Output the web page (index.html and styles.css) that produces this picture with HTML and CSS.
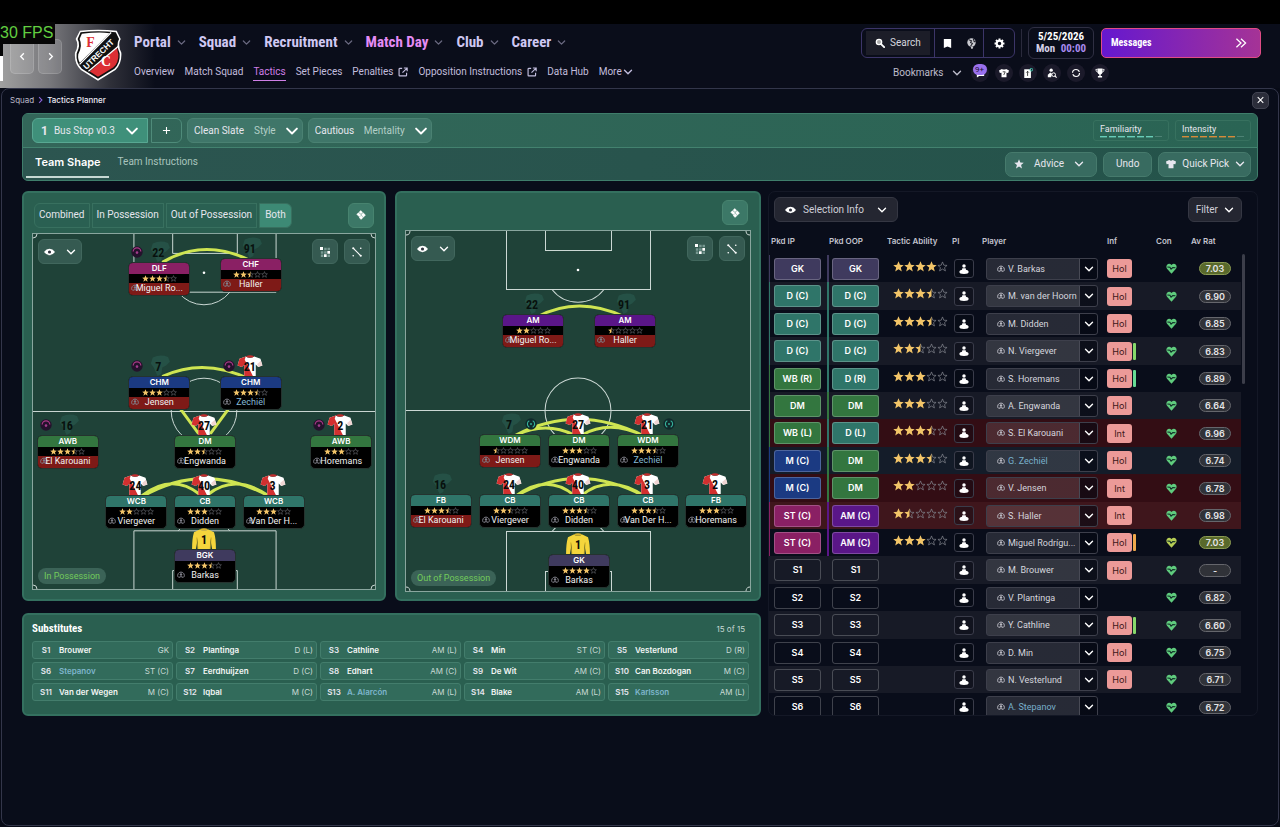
FILE: index.html
```html
<!DOCTYPE html>
<html lang="en">
<head>
<meta charset="utf-8">
<title>Tactics Planner</title>
<link rel="stylesheet" href="styles.css">
</head>
<body>
<svg class="defs" aria-hidden="true">
  <symbol id="chev" viewBox="0 0 10 10"><path d="M1.500 3.300 5 6.800 8.500 3.300" fill="none" stroke="currentColor" stroke-width="1.400" stroke-linecap="round" stroke-linejoin="round"/></symbol>
  <symbol id="star" viewBox="0 0 12 12"><path d="M6 .3 7.600 4.200 11.700 4.500 8.500 7.200 9.600 11.400 6 9 2.400 11.400 3.500 7.200.3 4.500 4.400 4.200Z" fill="currentColor"/></symbol>
  <symbol id="star-off" viewBox="0 0 12 12"><path d="M6 1 7.400 4.600 11 4.800 8.200 7.200 9.200 10.800 6 8.800 2.800 10.800 3.800 7.200 1 4.800 4.600 4.600Z" fill="none" stroke="#81838c" stroke-width=".8"/></symbol>
  <symbol id="star-half" viewBox="0 0 12 12"><path d="M6 1 7.400 4.600 11 4.800 8.200 7.200 9.200 10.800 6 8.800" fill="none" stroke="#81838c" stroke-width=".8"/><path d="M6 .3V9L2.400 11.400 3.500 7.200.3 4.500 4.400 4.200Z" fill="currentColor"/></symbol>
  <symbol id="ext" viewBox="0 0 12 12"><path d="M5 1.700H2Q1.300 1.700 1.300 2.400V10Q1.300 10.700 2 10.700H9.600Q10.300 10.700 10.300 10V7M7 1.200H11V5M10.600 1.600 5.400 6.800" fill="none" stroke="currentColor" stroke-width="1.400"/></symbol>
  <symbol id="eye" viewBox="0 0 14 10"><path d="M0 5Q3 .8 7 .8T14 5Q11 9.200 7 9.200T0 5Z" fill="currentColor"/><circle cx="7" cy="5" r="2" fill="#30333f"/></symbol>
  <symbol id="face" viewBox="0 0 12 12"><path d="M1.600 9A5 5 0 1 1 10.400 9" fill="none" stroke="currentColor" stroke-width="1.500"/><circle cx="6" cy="5.300" r="1.800" fill="currentColor"/><path d="M1.400 10.200 4.500 8H7.500L10.600 10.200H8L6 9 4 10.200Z" fill="currentColor"/></symbol>
  <symbol id="pawn" viewBox="0 0 12 12"><circle cx="6" cy="2.300" r="2.100" fill="currentColor"/><path d="M4 5H8L8.400 6.800Q11.600 7.400 11.600 9.400Q11.600 12 6 12T.4 9.400Q.4 7.400 3.600 6.800Z" fill="currentColor"/></symbol>
  <symbol id="heart" viewBox="0 0 12 12"><path d="M6 11.600 1.100 6.400Q-.3 3.700 1.200 1.800Q3.700-.4 6 2.300Q8.300-.4 10.800 1.800Q12.300 3.700 10.900 6.400Z" fill="currentColor"/><path d="M1.500 4.300 4.300 4.700 5.500 6.800 7.400 5 10.300 5.200" fill="none" stroke="#102c27" stroke-width="1.200"/></symbol>
  <symbol id="kit" viewBox="0 0 27 22"><path d="M9 1.500 2.500 4 .5 11 5 12.500 7.500 10V22H19.500V10L22 12.500 26.500 11 24.500 4 18 1.500Q13.500 4 9 1.500Z" fill="#fff"/><path d="M9 1.500 2.500 4 .5 11 5 12.500 7.500 10V22H16.500L8 5Z" fill="#d2302f"/><path d="M24.900 6 26.500 11 22 12.500 21 9.500Z" fill="#f0d5d3"/><path d="M9 1.500Q13.500-1 18 1.500Q13.500 4 9 1.500Z" fill="#c42c2c"/></symbol>
  <symbol id="keeper" viewBox="0 0 27 22"><path d="M9 1.500 3 4.500Q1 11 1 22H5L7 11V22H20V11L22 22H26Q26 11 24 4.500L18 1.500Q13.500 4 9 1.500Z" fill="#f4d53c"/><path d="M9 1.500Q13.500-1 18 1.500Q13.500 4 9 1.500Z" fill="#d8b42c"/><path d="M6 10 7 22M21 10 20 22" stroke="#b99a20" stroke-width=".8"/></symbol>
  <symbol id="ghost" viewBox="0 0 27 22"><path d="M8 2.500Q16-1 24 2L26 7 22 11 18 13 17 20 13 22 9 13 6 9Z" fill="#255146"/></symbol>
  <symbol id="attack" viewBox="0 0 12 12"><circle cx="6" cy="6" r="5.700" fill="#24122c"/><path d="M2.200 5.600A3.800 3.800 0 0 1 9.800 5.600" fill="none" stroke="#a83a86" stroke-width="1.200"/><circle cx="6" cy="6.600" r="1.300" fill="#a33d8d"/></symbol>
  <symbol id="defend" viewBox="0 0 12 12"><circle cx="6" cy="6" r="5.700" fill="#10292b"/><path d="M4.300 2.800A3.600 3.600 0 0 0 4.300 9.200M7.700 2.800A3.600 3.600 0 0 1 7.700 9.200" fill="none" stroke="#35b39b" stroke-width="1.100"/><circle cx="6" cy="6" r=".9" fill="#35b39b"/></symbol>
  <symbol id="tiles" viewBox="0 0 12 12"><path d="M5.600.6 8 2.800 6 4.800 3.600 2.600ZM3 3.200 6.200 6 4 8.200.8 5.200ZM8.600 3.400 11.400 6 9 8.600 6.400 5.600ZM6.200 6.600 8.500 9 6.200 11.400 3.700 9Z" fill="currentColor" stroke="currentColor" stroke-width=".5"/></symbol>
  <symbol id="dots" viewBox="0 0 12 12"><g fill="#779891"><path d="M5 1H8V4H5ZM9 1H12V4H9ZM1 5H4V8H1ZM5 5H8V8H5ZM1 9H4V12H1ZM9 9H12V12H9Z"/></g><path d="M0 0H3.600V3.600H0ZM8.800 4.800H12V8H8.800ZM4.800 8.800H8V12H4.800Z" fill="#fff"/></symbol>
  <symbol id="link" viewBox="0 0 12 12"><path d="M2 2 10 10" stroke="#fff" stroke-width="1.300"/><g fill="#fff"><circle cx="1.500" cy="1.500" r="1.300"/><circle cx="10.500" cy="10.500" r="1.300"/><circle cx="10.500" cy="1.500" r="1"/><circle cx="1.500" cy="10.500" r="1"/></g></symbol>
  <symbol id="tee" viewBox="0 0 14 12"><path d="M4.500.5 0 2.500.8 6.300 3.500 6V12H10.500V6L13.200 6.300 14 2.500 9.500.5Q7 2.500 4.500.5Z" fill="currentColor"/></symbol>
</svg>

<div class="letterbox"></div>
<div class="fps">30 FPS</div>

<header class="top">
  <div class="club">
    <button class="step" aria-label="Back"><svg viewBox="0 0 10 10"><path d="M6.500 1.500 3 5 6.500 8.500"/></svg></button>
    <button class="step" aria-label="Forward"><svg viewBox="0 0 10 10"><path d="M3.500 1.500 7 5 3.500 8.500"/></svg></button>
    <svg class="crest" viewBox="222 26 146 160" role="img" aria-label="FC Utrecht">
      <path d="M240 31Q295 25 352 31L364 56Q354 74 366 98Q368 132 348 150L295 183 243 150Q222 130 225 98Q238 74 227 56Z" fill="#fff"/>
      <path d="M242 35Q295 29 349 35L359 56Q349 74 361 100Q363 130 345 146L295 177 246 146Q227 128 230 100Q243 74 233 56Z" fill="#111"/>
      <path d="M246 40Q295 34 330 38L240 128Q233 118 235 102Q249 76 239 56Z" fill="#fff"/>
      <path d="M353 82Q354 92 357 102Q358 127 342 142L295 171 270 155Z" fill="#dc2f34"/>
      <path d="M335 36 239 133M357 78 266 154" stroke="#fff" stroke-width="4" fill="none"/>
      <text x="259" y="80" class="crest-f">F</text>
      <text x="304" y="139" class="crest-c">C</text>
      <text transform="translate(260 150) rotate(-44)" class="crest-band">UTRECHT</text>
    </svg>
  </div>
  <div class="navs">
    <nav class="primary" aria-label="Main">
      <a href="#">Portal <svg><use href="#chev"/></svg></a>
      <a href="#">Squad <svg><use href="#chev"/></svg></a>
      <a href="#">Recruitment <svg><use href="#chev"/></svg></a>
      <a href="#" class="on">Match Day <svg><use href="#chev"/></svg></a>
      <a href="#">Club <svg><use href="#chev"/></svg></a>
      <a href="#">Career <svg><use href="#chev"/></svg></a>
    </nav>
    <nav class="secondary" aria-label="Match Day">
      <a href="#">Overview</a>
      <a href="#">Match Squad</a>
      <a href="#" class="on">Tactics</a>
      <a href="#">Set Pieces</a>
      <a href="#">Penalties <svg><use href="#ext"/></svg></a>
      <a href="#">Opposition Instructions <svg><use href="#ext"/></svg></a>
      <a href="#">Data Hub</a>
      <a href="#" class="more">More <svg><use href="#chev"/></svg></a>
    </nav>
  </div>
  <div class="tools">
    <div class="tools-row">
      <div class="toolgroup">
        <button class="search"><svg viewBox="0 0 12 12"><circle cx="4.800" cy="4.800" r="3.200" fill="#aaa" stroke="#fff" stroke-width="1.600"/><path d="M7.300 7.300 11 11" stroke="#fff" stroke-width="2.200" stroke-linecap="round"/></svg>Search</button>
        <div class="tool-pair">
          <button class="tool" aria-label="Bookmark"><svg viewBox="0 0 12 12"><path d="M2 1H10V11L6 9.400 2 11Z" fill="#fff"/></svg></button>
          <button class="tool" aria-label="World"><svg viewBox="0 0 12 12"><circle cx="6" cy="5" r="4.600" fill="#c9cad0"/><path d="M3 2 6 3 5 5 7 6 5 9M8 1 9 4 10.500 4" stroke="#24252f" stroke-width="1.200" fill="none"/><path d="M5 9.500H8L7 12H6Z" fill="#c9cad0"/></svg></button>
        </div>
        <button class="tool gear" aria-label="Settings"><svg viewBox="0 0 12 12"><circle cx="6" cy="6" r="3" fill="none" stroke="#fff" stroke-width="2.200"/><g stroke="#fff" stroke-width="2.200"><path d="M6 .6V2.600M6 9.400V11.400M.6 6H2.600M9.400 6H11.400M2.200 2.200 3.600 3.600M8.400 8.400 9.800 9.800M9.800 2.200 8.400 3.600M3.600 8.400 2.200 9.800"/></g></svg></button>
      </div>
      <span class="rule"></span>
      <div class="date"><b>5/25/2026</b><b>Mon <i>00:00</i></b></div>
      <button class="messages">Messages <svg viewBox="0 0 14 12"><path d="M1.500 1 7 6 1.500 11M7 1 12.500 6 7 11" fill="none" stroke="#fff" stroke-width="1.500"/></svg></button>
    </div>
    <div class="bookmarks">
      <button class="bm-label">Bookmarks <svg><use href="#chev"/></svg></button>
      <button class="disc" aria-label="Inbox"><svg viewBox="0 0 12 12"><path d="M2 5H11V9.500H5L2.300 11.500Z" fill="#fff"/></svg><span class="badge">9+</span></button>
      <button class="disc" aria-label="Squad"><svg viewBox="0 0 14 12"><path d="M4 .5 0 2.600 1.200 6 3.500 5.600V12H10.500V5.600L12.800 6 14 2.600 10 .5Q7 2 4 .5Z" fill="#fff"/><path d="M5.200 4.300H8.700L6.700 8.800" stroke="#222" stroke-width="1.100" fill="none"/></svg></button>
      <button class="disc" aria-label="Tactics"><svg viewBox="0 0 12 12"><path d="M1.500 1.500H9.500V12H1.500Z" fill="#fff"/><path d="M5.500 4V9.500M4 5.500 5.500 4 7 5.500" stroke="#222" stroke-width="1" fill="none"/><circle cx="10" cy="2" r="1.600" fill="none" stroke="#3fc4ad" stroke-width="1.200"/></svg></button>
      <button class="disc" aria-label="Scouting"><svg viewBox="0 0 12 12"><circle cx="5" cy="2.600" r="2" fill="#fff"/><path d="M4 5.500 1 8V11H5L6 7" fill="#fff"/><circle cx="8" cy="8" r="2.200" fill="none" stroke="#fff" stroke-width="1.200"/><path d="M9.500 9.500 11.500 11.500" stroke="#fff" stroke-width="1.400"/></svg></button>
      <button class="disc" aria-label="Refresh"><svg viewBox="0 0 12 12"><circle cx="6" cy="6" r="4.200" fill="none" stroke="#fff" stroke-width="1.400" stroke-dasharray="11.200 2"/></svg></button>
      <button class="disc" aria-label="Competitions"><svg viewBox="0 0 12 12"><path d="M3 .5H9V5Q8.500 7.300 6.800 7.700V9.500H8.500V11.500H3.500V9.500H5.200V7.700Q3.500 7.300 3 5Z" fill="#fff"/><path d="M3 1.700H1Q1 4.600 3.400 5M9 1.700H11Q11 4.600 8.600 5" fill="none" stroke="#fff"/></svg></button>
    </div>
  </div>
</header>

<main class="frame">
  <div class="crumbs">
    <a href="#">Squad</a>
    <svg viewBox="0 0 10 10"><path d="M3 1 7 5 3 9"/></svg>
    <span>Tactics Planner</span>
    <button class="close" aria-label="Close"><svg viewBox="0 0 10 10"><path d="M1 1 9 9M9 1 1 9"/></svg></button>
  </div>

  <section class="toolbar">
    <div class="bar">
      <label class="drop tactic"><b>1</b><select aria-label="Tactic"><option>Bus Stop v0.3</option></select><svg><use href="#chev"/></svg></label>
      <button class="plus" aria-label="Add tactic"><svg viewBox="0 0 10 10"><path d="M5 1V9M1 5H9"/></svg></button>
      <label class="drop"><select><option>Clean Slate</option></select><span>Style</span><svg><use href="#chev"/></svg></label>
      <label class="drop"><select><option>Cautious</option></select><span>Mentality</span><svg><use href="#chev"/></svg></label>
      <div class="meters">
        <div class="meter teal">Familiarity<div class="dashes"><i></i><i></i><i></i><i></i><i></i><i></i><i></i></div></div>
        <div class="meter amber">Intensity<div class="dashes"><i></i><i></i><i></i><i></i><i></i><i></i><i></i></div></div>
      </div>
    </div>
    <div class="bar lower">
      <a href="#" class="tab on">Team Shape</a>
      <a href="#" class="tab">Team Instructions</a>
      <div class="actions">
        <button class="act"><svg><use href="#star"/></svg>Advice<svg><use href="#chev"/></svg></button>
        <button class="act">Undo</button>
        <button class="act tight"><svg><use href="#tee"/></svg>Quick Pick<svg><use href="#chev"/></svg></button>
      </div>
    </div>
  </section>

  <div class="columns">
    <div class="left">
      <div class="pitches">
        <section class="board">
          <div class="board-head">
            <button class="seg">Combined</button>
            <button class="seg">In Possession</button>
            <button class="seg">Out of Possession</button>
            <button class="seg on" aria-pressed="true">Both</button>
            <button class="square" aria-label="Layout"><svg><use href="#tiles"/></svg></button>
          </div>
          <div class="pitch in" id="pitch-in">
            <svg class="lines" viewBox="0 0 344 357" preserveAspectRatio="none">
              <g class="chalk">
                <path d="M101.500 0V58.500H244.500V0M140.500 0V19.500H205.500V0M146 58.500A33 33 0 0 0 198 58.500M0 178.500H344M101.500 357V298.500H244.500V357M140.500 357V338.500H205.500V357M146 298.500A33 33 0 0 1 198 298.500M0 4A4 4 0 0 0 4 0M340 0A4 4 0 0 0 344 4M0 353A4 4 0 0 1 4 357M340 357A4 4 0 0 1 344 353"/>
                <circle cx="172" cy="178" r="33"/>
              </g>
              <circle cx="172" cy="39" r="1.300" fill="#fff"/>
              <path class="chem" d="M131 28Q172 4 217 26M131 143Q172 124 218 146M147 174 166 200M198 174 179 200M110 263Q140 240 168 262M110 264Q172 228 238 264M176 262Q204 240 238 264"/>
            </svg>
            <button class="glass eye" aria-label="View"><svg class="eye-i"><use href="#eye"/></svg><svg><use href="#chev"/></svg></button>
            <div class="glasses"><button class="glass" aria-label="Zones"><svg><use href="#dots"/></svg></button><button class="glass" aria-label="Partnerships"><svg><use href="#link"/></svg></button></div>
            <span class="phase">In Possession</span>
          </div>
        </section>
        <section class="board">
          <div class="board-head short">
            <button class="square" aria-label="Layout"><svg><use href="#tiles"/></svg></button>
          </div>
          <div class="pitch out" id="pitch-out">
            <svg class="lines" viewBox="0 0 344 360" preserveAspectRatio="none">
              <g class="chalk">
                <path d="M100.500 0V58.500H244.500V0M139.500 0V19.500H205.500V0M146 58.500A33 33 0 0 0 198 58.500M0 179.500H344M100.500 360V300.500H244.500V360M139.500 360V340.500H205.500V360M146 300.500A33 33 0 0 1 198 300.500M0 4A4 4 0 0 0 4 0M340 0A4 4 0 0 0 344 4M0 356A4 4 0 0 1 4 360M340 360A4 4 0 0 1 344 356"/>
                <circle cx="172" cy="180" r="33"/>
              </g>
              <circle cx="172" cy="39" r="1.300" fill="#fff"/>
              <path class="chem" d="M131 86Q172 64 219 86M110 204Q140 190 168 204M110 204Q172 172 238 205M176 204Q204 188 238 205M110 265Q140 242 168 264M110 265Q172 230 238 265M176 264Q204 242 238 265"/>
            </svg>
            <button class="glass eye" aria-label="View"><svg class="eye-i"><use href="#eye"/></svg><svg><use href="#chev"/></svg></button>
            <div class="glasses"><button class="glass" aria-label="Zones"><svg><use href="#dots"/></svg></button><button class="glass" aria-label="Partnerships"><svg><use href="#link"/></svg></button></div>
            <span class="phase">Out of Possession</span>
          </div>
        </section>
      </div>
      <section class="subs">
        <div class="subs-head"><h2>Substitutes</h2><span>15 of 15</span></div>
        <div class="subs-grid" id="subs"></div>
      </section>
    </div>

    <section class="selection">
      <div class="sel-head">
        <button class="dark"><svg class="eye-i"><use href="#eye"/></svg>Selection Info<svg><use href="#chev"/></svg></button>
        <button class="dark filter">Filter<svg><use href="#chev"/></svg></button>
      </div>
      <div class="scroller">
        <table>
          <colgroup><col class="c58"><col class="c58"><col class="c64"><col class="c31"><col class="c121"><col class="c45"><col class="c43"><col class="c52"></colgroup>
          <thead><tr><th>Pkd IP</th><th>Pkd OOP</th><th>Tactic Ability</th><th class="wide">PI</th><th>Player</th><th class="inf">Inf</th><th class="con">Con</th><th>Av Rat</th></tr></thead>
          <tbody id="rows"></tbody>
        </table>
        <span class="thumb"></span>
      </div>
    </section>
  </div>
</main>
<script src="app.js"></script>
</body>
</html>
```
FILE: app.js
```js
const icon = (id, cls = '') => `<svg class="${cls}"><use href="#${id}"/></svg>`;

function stars(value) {
  let out = '';
  for (let i = 1; i <= 5; i++) {
    out += icon(value >= i ? 'star' : value >= i - 0.5 ? 'star-half' : 'star-off');
  }
  return `<span class="stars" role="img" aria-label="${value} of 5">${out}</span>`;
}

/* x, y: top centre of the card, in pitch units */
const inPossession = [
  { x: 127, y: 28, role: 'DLF', tone: 'st', rate: 3.5, name: 'Miguel Ro...', no: 22, kit: 'ghost', out: 1, duty: 'attack' },
  { x: 219, y: 24, role: 'CHF', tone: 'st', rate: 2.5, name: 'Haller', no: 91, kit: 'ghost', out: 1 },
  { x: 127, y: 143, role: 'CHM', tone: 'm', rate: 3, name: 'Jensen', no: 7, kit: 'ghost', out: 1, duty: 'attack' },
  { x: 219, y: 143, role: 'CHM', tone: 'm', rate: 3.5, name: 'Zechiël', no: 21, kit: 'kit', young: 1, duty: 'attack' },
  { x: 35, y: 202, role: 'AWB', tone: 'dm', rate: 3.5, name: 'El Karouani', no: 16, kit: 'ghost', out: 1, duty: 'attack' },
  { x: 173, y: 202, role: 'DM', tone: 'dm', rate: 2.5, name: 'Engwanda', no: 27, kit: 'kit' },
  { x: 310, y: 202, role: 'AWB', tone: 'dm', rate: 3, name: 'Horemans', no: 2, kit: 'kit', duty: 'attack' },
  { x: 104, y: 262, role: 'WCB', tone: 'd', rate: 2, name: 'Viergever', no: 24, kit: 'kit' },
  { x: 173, y: 262, role: 'CB', tone: 'd', rate: 3, name: 'Didden', no: 40, kit: 'kit' },
  { x: 242, y: 262, role: 'WCB', tone: 'd', rate: 3, name: 'Van Der H...', no: 3, kit: 'kit' },
  { x: 173, y: 317, role: 'BGK', tone: 'gk', rate: 3.5, name: 'Barkas', no: 1, kit: 'keeper' }
];
const outOfPossession = [
  { x: 127, y: 83, role: 'AM', tone: 'am', rate: 2, name: 'Miguel Ro...', no: 22, kit: 'ghost', out: 1 },
  { x: 219, y: 83, role: 'AM', tone: 'am', rate: 0.5, name: 'Haller', no: 91, kit: 'ghost', out: 1 },
  { x: 104, y: 203, role: 'WDM', tone: 'dm', rate: 0.5, name: 'Jensen', no: 7, kit: 'ghost', out: 1, duty: 'defend' },
  { x: 173, y: 203, role: 'DM', tone: 'dm', rate: 3, name: 'Engwanda', no: 27, kit: 'kit' },
  { x: 242, y: 203, role: 'WDM', tone: 'dm', rate: 3.5, name: 'Zechiël', no: 21, kit: 'kit', young: 1, duty: 'defend' },
  { x: 35, y: 263, role: 'FB', tone: 'd', rate: 3.5, name: 'El Karouani', no: 16, kit: 'ghost', out: 1 },
  { x: 104, y: 263, role: 'CB', tone: 'd', rate: 2.5, name: 'Viergever', no: 24, kit: 'kit' },
  { x: 173, y: 263, role: 'CB', tone: 'd', rate: 3.5, name: 'Didden', no: 40, kit: 'kit' },
  { x: 242, y: 263, role: 'CB', tone: 'd', rate: 3.5, name: 'Van Der H...', no: 3, kit: 'kit' },
  { x: 310, y: 263, role: 'FB', tone: 'd', rate: 3, name: 'Horemans', no: 2, kit: 'kit' },
  { x: 173, y: 323, role: 'GK', tone: 'gk', rate: 4, name: 'Barkas', no: 1, kit: 'keeper' }
];

function drawPitch(id, players, height) {
  document.getElementById(id).insertAdjacentHTML('beforeend', players.map(p => `
    <div class="node" style="left:${p.x / 344 * 100}%;top:${p.y / height * 100}%">
      <div class="shirt ${p.kit}">${icon(p.kit)}<b>${p.no}</b></div>
      ${p.duty ? icon(p.duty, 'duty ' + p.duty) : ''}
      <div class="card">
        <div class="role ${p.tone}">${p.role}</div>
        ${stars(p.rate)}
        <div class="who ${p.out ? 'absent' : ''} ${p.young ? 'young' : ''}">${icon('face')}<span>${p.name}</span></div>
      </div>
    </div>`).join(''));
}
drawPitch('pitch-in', inPossession, 357);
drawPitch('pitch-out', outOfPossession, 360);

const subs = [
  ['Brouwer', 'GK'], ['Plantinga', 'D (L)'], ['Cathline', 'AM (L)'], ['Min', 'ST (C)'], ['Vesterlund', 'D (R)'],
  ['Stepanov', 'ST (C)', 1], ['Eerdhuijzen', 'D (C)'], ['Edhart', 'AM (C)'], ['De Wit', 'AM (C)'], ['Can Bozdogan', 'M (C)'],
  ['Van der Wegen', 'M (C)'], ['Iqbal', 'M (C)'], ['A. Alarcón', 'AM (L)', 1], ['Blake', 'AM (L)'], ['Karlsson', 'AM (L)', 1]
];
document.getElementById('subs').innerHTML = subs.map(([name, pos, young], i) =>
  `<div class="sub"><b>S${i + 1}</b><strong class="${young ? 'young' : ''}">${name}</strong><span>${pos}</span></div>`).join('');

/* in possession, out of possession, stars, name, info, info bar, rating, flags */
const rows = [
  ['GK', 'GK', 4, 'V. Barkas', 'Hol', '', '7.03'],
  ['D (C)', 'D (C)', 3.5, 'M. van der Hoorn', 'Hol', '', '6.90'],
  ['D (C)', 'D (C)', 3.5, 'M. Didden', 'Hol', '', '6.85'],
  ['D (C)', 'D (C)', 2.5, 'N. Viergever', 'Hol', 'lime', '6.83'],
  ['WB (R)', 'D (R)', 3, 'S. Horemans', 'Hol', 'mint', '6.89'],
  ['DM', 'DM', 3, 'A. Engwanda', 'Hol', '', '6.64'],
  ['WB (L)', 'D (L)', 3.5, 'S. El Karouani', 'Int', '', '6.96', 'red'],
  ['M (C)', 'DM', 3.5, 'G. Zechiël', 'Hol', '', '6.74', 'young'],
  ['M (C)', 'DM', 2, 'V. Jensen', 'Int', '', '6.78', 'red'],
  ['ST (C)', 'AM (C)', 1.5, 'S. Haller', 'Int', '', '6.98', 'red lit'],
  ['ST (C)', 'AM (C)', 3, 'Miguel Rodrígu...', 'Hol', 'orange', '7.03', 'tired'],
  ['S1', 'S1', 0, 'M. Brouwer', 'Hol', '', '-'],
  ['S2', 'S2', 0, 'V. Plantinga', '', '', '6.82'],
  ['S3', 'S3', 0, 'Y. Cathline', 'Hol', 'lime', '6.60'],
  ['S4', 'S4', 0, 'D. Min', 'Hol', '', '6.75'],
  ['S5', 'S5', 0, 'N. Vesterlund', 'Hol', '', '6.71'],
  ['S6', 'S6', 0, 'A. Stepanov', '', '', '6.72', 'young']
];
const tones = { GK: 'gk', D: 'd', WB: 'dm', DM: 'dm', M: 'm', ST: 'st', AM: 'am' };
const tone = pos => tones[pos.split(' ')[0]] || 'none';

document.getElementById('rows').innerHTML = rows.map(([ip, oop, rate, name, info, bar, avg, flags = '']) => `
  <tr class="${flags}">
    <td class="edge edge-${tone(ip)}"><button class="pos ${tone(ip)}">${ip}</button></td>
    <td class="edge edge-${tone(oop)}"><button class="pos ${tone(oop)}">${oop}</button></td>
    <td class="ability">${rate ? stars(rate) : ''}</td>
    <td><button class="pi" aria-label="Player instructions">${icon('pawn')}</button></td>
    <td><div class="pick">${icon('face', 'pick-face')}<select aria-label="Player"><option>${name}</option></select>${icon('chev', 'pick-chev')}</div></td>
    <td class="inf">${info ? `<span class="tag">${info}</span>` : ''}${bar ? `<span class="tagbar ${bar}"></span>` : ''}</td>
    <td class="heart">${icon('heart')}</td>
    <td class="rate"><span class="${avg === '7.03' ? 'good' : ''}">${avg}</span></td>
  </tr>`).join('');
```
FILE: styles.css
```css
* { box-sizing: border-box; }
html, body { height: 100%; }
body {
  margin: 0;
  display: flex;
  flex-direction: column;
  background: #080b17;
  color: #e6e6ee;
  font: 10px/12px Roboto, "Liberation Sans", sans-serif;
}
button, select { font: inherit; color: inherit; margin: 0; padding: 0; border: 0; background: none; white-space: nowrap; }
select { appearance: none; outline: 0; }
select option { color: #111; }
a { color: inherit; text-decoration: none; }
svg { display: block; flex: none; }
.defs { position: absolute; width: 0; height: 0; }
.young { color: #84b9d4; }

/* ---------- header ---------- */
.letterbox { height: 24px; background: #000; flex: none; }
.fps {
  position: absolute; left: 0; top: 22px; width: 55px; height: 22px;
  background: #060606; color: #62cf41; white-space: nowrap;
  font: 16px/21px "Liberation Sans", sans-serif;
}
.fps::after { content: ""; position: absolute; left: 0; top: 22px; width: 3px; height: 37px; background: linear-gradient(#060606 12px, #fff 12px); }
.top {
  display: flex; flex: none; height: 64px; padding-right: 19px;
  background: linear-gradient(90deg, #a0a0a0 0, #77777b 50px, #2f3039 110px, #0a0d1a 155px);
}
.club { display: flex; width: 134px; padding: 5px 0 0 10px; }
.step {
  width: 24px; height: 35px; margin: 10px 4px 0 0; border-radius: 5px;
  background: rgba(255, 255, 255, .13); border: 1px solid rgba(255, 255, 255, .14);
}
.step svg { width: 9px; height: 9px; margin: auto; fill: none; stroke: #fff; stroke-width: 1.5; }
.crest { width: 48px; height: 53px; margin-left: 8px; }
.crest-f, .crest-c { font: bold 42px "Liberation Serif", serif; }
.crest-f { fill: #dc2f34; }
.crest-c { fill: #fff; }
.crest-band { font: bold 25px "Liberation Sans", sans-serif; fill: #fff; }

.navs { flex: 1; }
.primary, .secondary, .tools-row, .bookmarks { display: flex; align-items: center; }
.primary { height: 36px; gap: 13px; }
.primary a {
  display: flex; align-items: center; gap: 6px; color: #cfc8f2; white-space: nowrap;
  font: bold 15px/20px "Liberation Sans Narrow", "Roboto Condensed", "Liberation Sans", sans-serif;
}
.primary svg { width: 9px; height: 9px; color: #6a6980; }
.primary .on { color: #e58bf5; }
.secondary { height: 24px; gap: 10px; color: #c2bddd; white-space: nowrap; }
.secondary a { display: flex; gap: 5px; align-items: center; height: 17px; border-bottom: 1px solid transparent; }
.secondary svg { width: 10px; height: 10px; }
.secondary .more { gap: 1px; }
.secondary .on { color: #cf7fe6; border-color: #cf7fe6; }

.tools-row { height: 37px; padding-top: 1px; }
.toolgroup { display: flex; height: 30px; border: 1px solid #3c3568; border-radius: 6px; overflow: hidden; }
.search { display: flex; align-items: center; gap: 5px; width: 64px; margin: 2px 4px; padding-left: 9px; background: #1c1d28; color: #d5d5de; }
.search svg { width: 10px; height: 10px; }
.tool-pair { display: flex; width: 50px; border: solid #3c3568; border-width: 0 1px; }
.tool { flex: 1; }
.tool svg { width: 11px; height: 11px; margin: auto; }
.gear { flex: none; width: 30px; }
.rule { width: 1px; height: 28px; background: #2a2a3c; margin: 0 6px; }
.date {
  display: flex; flex-direction: column; align-items: center; justify-content: center;
  width: 66px; height: 32px; border: 1px solid #2f2f42; border-radius: 6px;
}
.date b { font: bold 11px/12px "Liberation Sans Narrow", "Roboto Condensed", "Liberation Sans", sans-serif; color: #fff; }
.date b + b { color: #d5d0e8; }
.date i { font-style: normal; color: #a98bf0; margin-left: 3px; }
.messages {
  display: flex; align-items: center; justify-content: space-between;
  width: 160px; height: 30px; margin-left: 7px; padding: 0 13px 1px 9px; border-radius: 5px;
  border: 1px solid #e04c86; background: linear-gradient(90deg, #6518cf, #a53396);
  color: #fff; font: bold 10px/12px "Liberation Sans Narrow", "Roboto Condensed", "Liberation Sans", sans-serif;
}
.messages svg { width: 12px; height: 10px; }
.bookmarks { height: 24px; gap: 6px; padding-left: 32px; }
.bm-label { display: flex; align-items: center; gap: 8px; color: #bdbccb; margin-right: 3px; }
.bm-label svg { width: 10px; height: 10px; }
.disc { position: relative; width: 18px; height: 18px; border-radius: 50%; background: #1b1a2a; }
.disc svg { width: 10px; height: 10px; margin: auto; }
.badge { position: absolute; left: 2px; top: 0; width: 14px; height: 11px; border-radius: 6px; background: #9a70ee; color: #1b1033; font-size: 8px; line-height: 11px; }

/* ---------- frame ---------- */
.frame {
  flex: 1; margin: 0 1px 1px; padding: 0 20px; border: 1px solid #33364a; border-radius: 8px;
  background: #090d1a; min-height: 0;
}
.crumbs { display: flex; align-items: center; gap: 3px; height: 22px; margin: 0 -11px 0 -12px; font: 8px/12px Inter, Roboto, sans-serif; color: #bcbac9; }
.crumbs svg { width: 7px; height: 8px; fill: none; stroke: #8a62d8; stroke-width: 1.6; }
.crumbs span { color: #eceaf4; font-weight: 500; }
.close { margin-left: auto; width: 17px; height: 17px; border-radius: 5px; background: #2b2d3a; border: 1px solid #414351; }
.close svg { margin: auto; stroke: #fff; stroke-width: 1.5; }

.toolbar { margin-top: 2px; border: 1px solid #3f7d6b; border-radius: 6px; background: #2a5f52; overflow: hidden; }
.bar { display: flex; align-items: center; gap: 5px; height: 33px; padding: 0 6px 0 9px; background: linear-gradient(90deg, #336659, #2a6454); }
.lower { height: 33px; padding-left: 3px; gap: 0; border-top: 1px solid #43826f; background: linear-gradient(90deg, #2c5550, #24534a); }
.drop {
  display: flex; align-items: center; gap: 9px; height: 25px; padding: 0 3px 0 6px; border-radius: 6px;
  background: #3f7669; border: 1px solid #4a8172;
}
.drop span { color: #b3cfc7; }
.drop svg { width: 14px; height: 14px; color: #fff; }
.tactic { gap: 6px; width: 116px; padding: 0 8px; border-radius: 6px 0 0 6px; background: #3f907a; border-color: #58a892; margin-right: -2px; }
.tactic svg { margin-left: auto; }
.tactic b { font-size: 12px; }
.plus { width: 31px; height: 25px; border: 1px solid #4f8b7a; border-radius: 0 6px 6px 0; }
.plus svg { width: 9px; height: 9px; margin: auto; stroke: #fff; stroke-width: 1.2; }
.meters, .actions { display: flex; gap: 6px; margin-left: auto; }
.meter { width: 76px; height: 21px; padding: 2px 6px; border: 1px solid #37715f; border-radius: 3px; font-size: 9px; line-height: 12px; }
.dashes { display: flex; gap: 2px; margin-top: 1px; }
.dashes i { flex: 1; height: 1px; background: #68cdb8; box-shadow: 0 1px rgba(104, 205, 184, .4); }
.amber i { background: #d68b3a; box-shadow: 0 1px rgba(214, 139, 58, .4); }
.dashes i:last-child { background: #4d8274; box-shadow: none; }
.tab { height: 28px; padding: 6px 8px 0 9px; color: #a9c4bd; border-bottom: 2px solid transparent; white-space: nowrap; }
.tab.on { color: #fff; font-family: Inter, sans-serif; font-size: 11px; font-weight: 600; border-color: #c6d8d3; }
.act { display: flex; align-items: center; justify-content: center; gap: 10px; height: 25px; padding: 0 12px 0 8px; border: 1px solid #467a6c; border-radius: 7px; background: #386b60; }
.act:nth-child(2) { padding: 0 12px; }
.act svg { width: 10px; height: 10px; }
.act.tight { gap: 6px; padding: 0 5px 0 7px; }

.columns { display: grid; grid-template-columns: 739fr 490fr; gap: 7px; margin-top: 10px; }
.left { display: grid; gap: 12px; align-content: start; min-width: 0; }
.pitches { display: grid; grid-template-columns: 364fr 366fr; gap: 9px; }
.board, .subs { border: 2px solid #34705f; border-radius: 6px; background: #2a5f50; }
.board { padding: 0 8px 7px; }
.board-head { display: flex; align-items: center; gap: 2px; height: 40px; padding: 4px 2px 0 2px; }
.board-head.short { height: 37px; padding-bottom: 2px; padding-right: 3px; }
.seg { height: 25px; padding: 0 4px; border: 1px solid #38705f; background: #2a6052; }
.seg:first-child { border-radius: 6px 0 0 6px; }
.seg.on { border-radius: 0 6px 6px 0; background: #3d8a75; padding: 0 5px; }
.square { margin-left: auto; width: 26px; height: 25px; border-radius: 6px; background: #3c7867; border: 1px solid #47836f; }
.square svg { width: 10px; height: 10px; margin: auto; color: #fff; }

.pitch { position: relative; background: #1f4238; border: 1px solid #89a69e; }
.pitch.in { aspect-ratio: 344 / 357; }
.pitch.out { aspect-ratio: 344 / 360; }
.lines { position: absolute; inset: 0; width: 100%; height: 100%; }
.chalk { fill: none; stroke: #cbd8d4; stroke-width: 1; }
.chem { fill: none; stroke: #cfe552; stroke-width: 3; stroke-linecap: round; }
.glass { width: 26px; height: 25px; border-radius: 6px; background: #355a51; border: 1px solid #41675d; }
.glass svg { width: 10px; height: 10px; margin: auto; color: #fff; }
.glass.eye { position: absolute; left: 5px; top: 5px; display: flex; align-items: center; width: 44px; }
svg.eye-i, .dark svg.eye-i, .glass svg.eye-i { width: 11px; height: 8px; }
.glasses { position: absolute; right: 5px; top: 5px; display: flex; gap: 6px; }
.phase { position: absolute; left: 5px; bottom: 5px; padding: 2px 6px; border-radius: 8px; background: #3b6357; color: #73cc5b; font-size: 9px; line-height: 12px; }

.node { position: absolute; width: 62px; transform: translateX(-50%); }
.card { position: relative; border: 1px solid #25332f; border-radius: 5px; overflow: hidden; background: #000; }
.role { height: 11px; color: #fff; text-align: center; font: 600 8px/11px Inter, sans-serif; }
.stars { display: flex; justify-content: center; color: #f3c568; }
.card .stars { padding: 1px 0; }
.card .stars svg { width: 7px; height: 7px; }
.who { position: relative; height: 12px; text-align: center; font-size: 9px; line-height: 11px; color: #f2f2f2; white-space: nowrap; }
.who.young { color: #84b9d4; }
.who svg { position: absolute; left: 2px; top: 1px; width: 8px; height: 8px; color: #80808a; }
.who span { position: relative; }
.who.absent { background: #7e1a17; }
.shirt { position: absolute; left: 17px; bottom: 100%; width: 26px; height: 21px; }
.shirt svg { width: 26px; height: 21px; }
.shirt b { position: absolute; inset: 5px 0 0; text-align: center; color: #0b0b0b; font: bold 12px/14px "Liberation Sans Narrow", "Roboto Condensed", "Liberation Sans", sans-serif; }
.shirt.ghost b { color: #08110e; }
.duty { position: absolute; width: 12px; height: 12px; top: -16px; left: 3px; }
.duty.defend { left: 46px; }

.gk { background: #3f3a5e; } .d { background: #2f7569; } .dm { background: #33763f; }
.m { background: #1b3a82; } .st { background: #8a2064; } .am { background: #5a1688; }

.subs { padding: 5px 10px 13px 8px; }
.subs-head { display: flex; justify-content: space-between; align-items: center; height: 17px; padding-right: 4px; font: 8px/12px Inter, sans-serif; color: #c6d8d2; }
.subs h2 { margin: 0; color: #fff; font: bold 11px/14px "Liberation Sans Narrow", "Roboto Condensed", "Liberation Sans", sans-serif; }
.subs-grid { display: grid; grid-template-columns: repeat(5, 1fr); gap: 3px; margin-top: 4px; }
.sub { display: flex; align-items: center; height: 18px; padding-right: 3px; border: 1px solid #437d6c; border-radius: 3px; background: #326b5b; font: 8px/12px Inter, sans-serif; white-space: nowrap; }
.sub b { width: 26px; text-align: center; font-weight: 600; }
.sub strong { font-weight: 600; color: #f4f7f6; }
.sub strong.young { color: #7fb6cc; }
.sub span { margin-left: auto; color: #c9dad5; }

/* ---------- selection table ---------- */
.selection { display: flex; flex-direction: column; border: 1px solid #141826; border-radius: 7px; overflow: hidden; height: 0; min-height: 100%; }
.sel-head { display: flex; justify-content: space-between; height: 36px; flex: none; padding: 5px 15px 0 5px; }
.dark { display: flex; align-items: center; gap: 7px; height: 25px; padding: 0 10px; border: 1px solid #353743; border-radius: 6px; background: #242631; color: #cfcfd8; }
.dark svg { width: 10px; height: 10px; color: #fff; }
.dark > svg:last-child { margin-left: 6px; }
.dark.filter { padding: 0 7px; gap: 0; }
.scroller { position: relative; flex: 1; min-height: 0; overflow: hidden; padding-right: 19px; }
table { width: 100%; table-layout: fixed; border-collapse: separate; border-spacing: 0; }
.c58 { width: 58px; } .c64 { width: 64px; } .c31 { width: 31px; } .c121 { width: 121px; }
.c45 { width: 45px; } .c43 { width: 43px; } .c52 { width: 52px; }
th { height: 24px; padding: 0 0 1px 2px; text-align: left; font: 600 8px/12px Inter, sans-serif; color: #c4c4cf; white-space: nowrap; }
th.wide { padding-left: 3px; }
th.con { padding-left: 10px; }
th.inf { padding-left: 6px; }
tr { height: 27px; }
tbody tr:nth-child(5n+2), tbody tr:nth-child(5n+4) { height: 28px; }
tbody tr:nth-child(even) { background: #171a26; }
tbody tr:nth-child(8) { background: #141c29; }
tbody tr.red { background: #330d14; }
tbody tr.lit { background: #3f161c; }
td { padding: 0; vertical-align: middle; }
.edge { padding-left: 4px; border-left: 1px solid transparent; }
.edge + .edge { border-left-width: 2px; padding-left: 3px; }
.edge-gk { border-color: #3f3a5e; } .edge-d { border-color: #2f7569; } .edge-dm { border-color: #33763f; }
.edge-m { border-color: #1b3a82; } .edge-st { border-color: #8a2064; } .edge-am { border-color: #5a1688; }
.pos { display: block; width: 47px; height: 22px; border: 1px solid rgba(255, 255, 255, .22); border-radius: 3px; font: 600 9px/12px Inter, sans-serif; color: #fff; text-align: center; }
.ability { padding: 0 0 5px 8px; }
.ability .stars { justify-content: flex-start; }
.ability svg { width: 11px; height: 11px; }
.pi { display: block; width: 20px; height: 19px; margin-left: 5px; border: 1px solid #3a3c4a; border-radius: 3px; background: rgba(5, 8, 18, .35); color: #fff; }
.pi svg { width: 10px; height: 10px; margin: auto; }
.pick { position: relative; margin: 0 3px 0 6px; }
.pick select { display: block; width: 100%; height: 22px; padding: 0 18px 0 21px; border: 1px solid #3d3f4b; border-radius: 3px; font-size: 9px; color: #d6d6de; background: linear-gradient(90deg, rgba(255, 255, 255, .12) calc(100% - 18px), #484a55 calc(100% - 18px), #484a55 calc(100% - 17px), rgba(5, 8, 18, .6) calc(100% - 17px)); }
.young .pick select { color: #78b0cb; }
.pick-face { position: absolute; left: 11px; top: 7px; width: 8px; height: 8px; color: #b9b9c2; }
.pick-chev { position: absolute; right: 4px; top: 6px; width: 10px; height: 10px; color: #fff; pointer-events: none; }
td.inf { padding-left: 6px; white-space: nowrap; font-size: 0; }
.tag { display: inline-block; width: 25px; height: 19px; border-radius: 3px; background: #ec9a98; color: #3b1517; font: 9px/19px Inter, sans-serif; text-align: center; vertical-align: middle; }
.tagbar { display: inline-block; width: 3px; height: 17px; margin-left: 1px; border-radius: 1px; vertical-align: middle; }
.lime { background: #86d96a; } .mint { background: #67dc93; } .orange { background: #f0a94c; }
.heart { color: #5fcb7d; }
.heart svg { width: 11px; height: 11px; margin-left: 20px; }
.tired .heart { color: #b5cc55; }
.rate span { display: block; width: 32px; height: 13px; margin-left: 10px; border: 1px solid #65666c; border-radius: 7px; background: #303238; color: #e4e4e6; font: 600 9px/11px Inter, sans-serif; text-align: center; }
.rate .good { background: #59692b; border-color: #8a9a52; }
.thumb { position: absolute; right: 12px; top: 26px; width: 3px; height: 130px; border-radius: 2px; background: #3c3e4a; }
```
